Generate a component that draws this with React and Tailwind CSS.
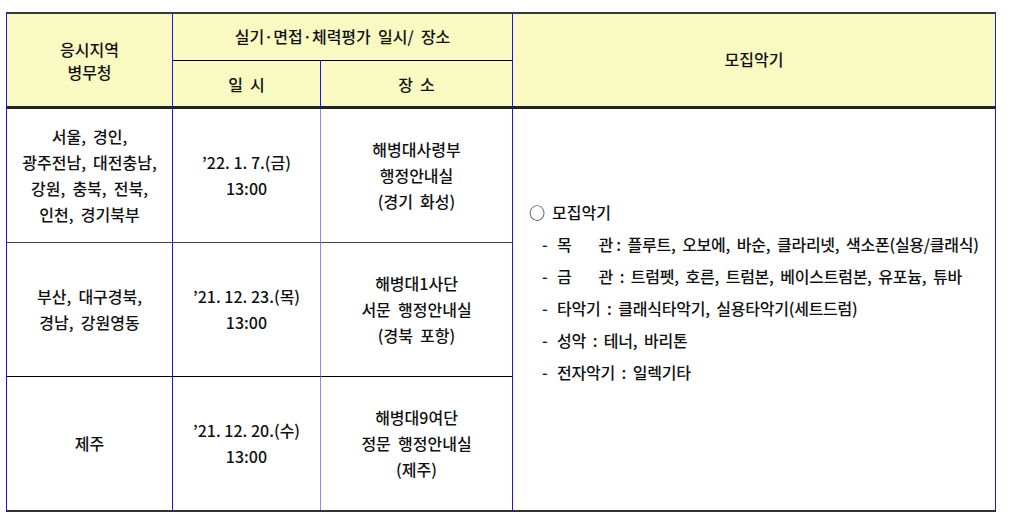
import React from "react";

const hdr = "bg-[#f9f9c2] flex items-center justify-center text-center";
const cell = "flex items-center justify-center text-center";

function Item({ children }) {
  return (
    <div className="flex h-[32px] items-center pl-[13px] whitespace-pre tracking-[-0.25px]">
      <span className="w-[15px]">-</span>
      {children}
    </div>
  );
}

export default function App() {
  return (
    <div className="min-h-[524px] w-[1016px] bg-white pt-[12px] pl-[6px] font-['Noto_Sans_CJK_KR',sans-serif] font-medium text-[16px] leading-[26px] text-[#111]">
      <div className="w-[990px] border-t-2 border-b-2 border-t-[#3a3a3a] border-b-[#333] border-x border-x-[#1515ff]">
        <div className="grid grid-cols-[166px_148px_192px_482px] grid-rows-[47px_48px_134px_134px_133px]">
          {/* header */}
          <div className={`${hdr} row-span-2 border-r border-r-[#1515ff] border-b-[3px] border-b-[#222] pt-[2px] leading-[23px]`}>
            <div>
              <div>응시지역</div>
              <div>병무청</div>
            </div>
          </div>
          <div className={`${hdr} col-span-2 border-r border-r-[#1515ff] border-b border-b-black pb-[2px]`}>
            실기·면접·체력평가&nbsp; 일시/&nbsp; 장소
          </div>
          <div className={`${hdr} row-span-2 border-b-[3px] border-b-[#222] pb-[2px]`}>모집악기</div>
          <div className={`${hdr} border-r border-r-[#1515ff] border-b-[3px] border-b-[#222] whitespace-pre pt-[1px]`}>일  시</div>
          <div className={`${hdr} border-r border-r-[#1515ff] border-b-[3px] border-b-[#222] whitespace-pre pt-[1px]`}>장  소</div>

          {/* row 1 */}
          <div className={`${cell} border-r border-r-[#1515ff] border-b border-b-[#444] pb-[2px]`}>
            <div>
              서울,&nbsp; 경인,
              <br />
              광주전남,&nbsp; 대전충남,
              <br />
              강원,&nbsp; 충북,&nbsp; 전북,
              <br />
              인천,&nbsp; 경기북부
            </div>
          </div>
          <div className={`${cell} border-r border-r-[#8a8aff] border-b border-b-[#444] pb-[2px]`}>
            <div>
              ’22. 1. 7.(금)
              <br />
              13:00
            </div>
          </div>
          <div className={`${cell} border-r border-r-[#1515ff] border-b border-b-[#444] pb-[2px]`}>
            <div>
              해병대사령부
              <br />
              행정안내실
              <br />
              (경기&nbsp; 화성)
            </div>
          </div>
          <div className="row-span-3 flex flex-col justify-center pl-[16px] pb-[4px]">
            <div className="flex h-[32px] items-center whitespace-pre">
              <span className="w-[23px] text-[16px]">○</span>모집악기
            </div>
            <Item>
              목<span className="inline-block w-[27px]" />관 :&nbsp; 플루트,&nbsp; 오보에,&nbsp; 바순,&nbsp; 클라리넷,&nbsp; 색소폰(실용/클래식)
            </Item>
            <Item>
              금<span className="inline-block w-[27px]" />관&nbsp; :&nbsp; 트럼펫,&nbsp; 호른,&nbsp; 트럼본,&nbsp; 베이스트럼본,&nbsp; 유포늄,&nbsp; 튜바
            </Item>
            <Item>타악기&nbsp; :&nbsp; 클래식타악기,&nbsp; 실용타악기(세트드럼)</Item>
            <Item>성악&nbsp; :&nbsp; 테너,&nbsp; 바리톤</Item>
            <Item>전자악기&nbsp; :&nbsp; 일렉기타</Item>
            <div className="h-[32px]" />
          </div>

          {/* row 2 */}
          <div className={`${cell} border-r border-r-[#1515ff] border-b border-b-black pb-[2px]`}>
            <div>
              부산,&nbsp; 대구경북,
              <br />
              경남,&nbsp; 강원영동
            </div>
          </div>
          <div className={`${cell} border-r border-r-[#8a8aff] border-b border-b-black pb-[2px]`}>
            <div>
              ’21. 12. 23.(목)
              <br />
              13:00
            </div>
          </div>
          <div className={`${cell} border-r border-r-[#1515ff] border-b border-b-black pb-[2px]`}>
            <div>
              해병대1사단
              <br />
              서문&nbsp; 행정안내실
              <br />
              (경북&nbsp; 포항)
            </div>
          </div>

          {/* row 3 */}
          <div className={`${cell} border-r border-r-[#1515ff] pb-[2px]`}>제주</div>
          <div className={`${cell} border-r border-r-[#8a8aff] pb-[2px]`}>
            <div>
              ’21. 12. 20.(수)
              <br />
              13:00
            </div>
          </div>
          <div className={`${cell} border-r border-r-[#1515ff] pb-[2px]`}>
            <div>
              해병대9여단
              <br />
              정문&nbsp; 행정안내실
              <br />
              (제주)
            </div>
          </div>
        </div>
      </div>
    </div>
  );
}
